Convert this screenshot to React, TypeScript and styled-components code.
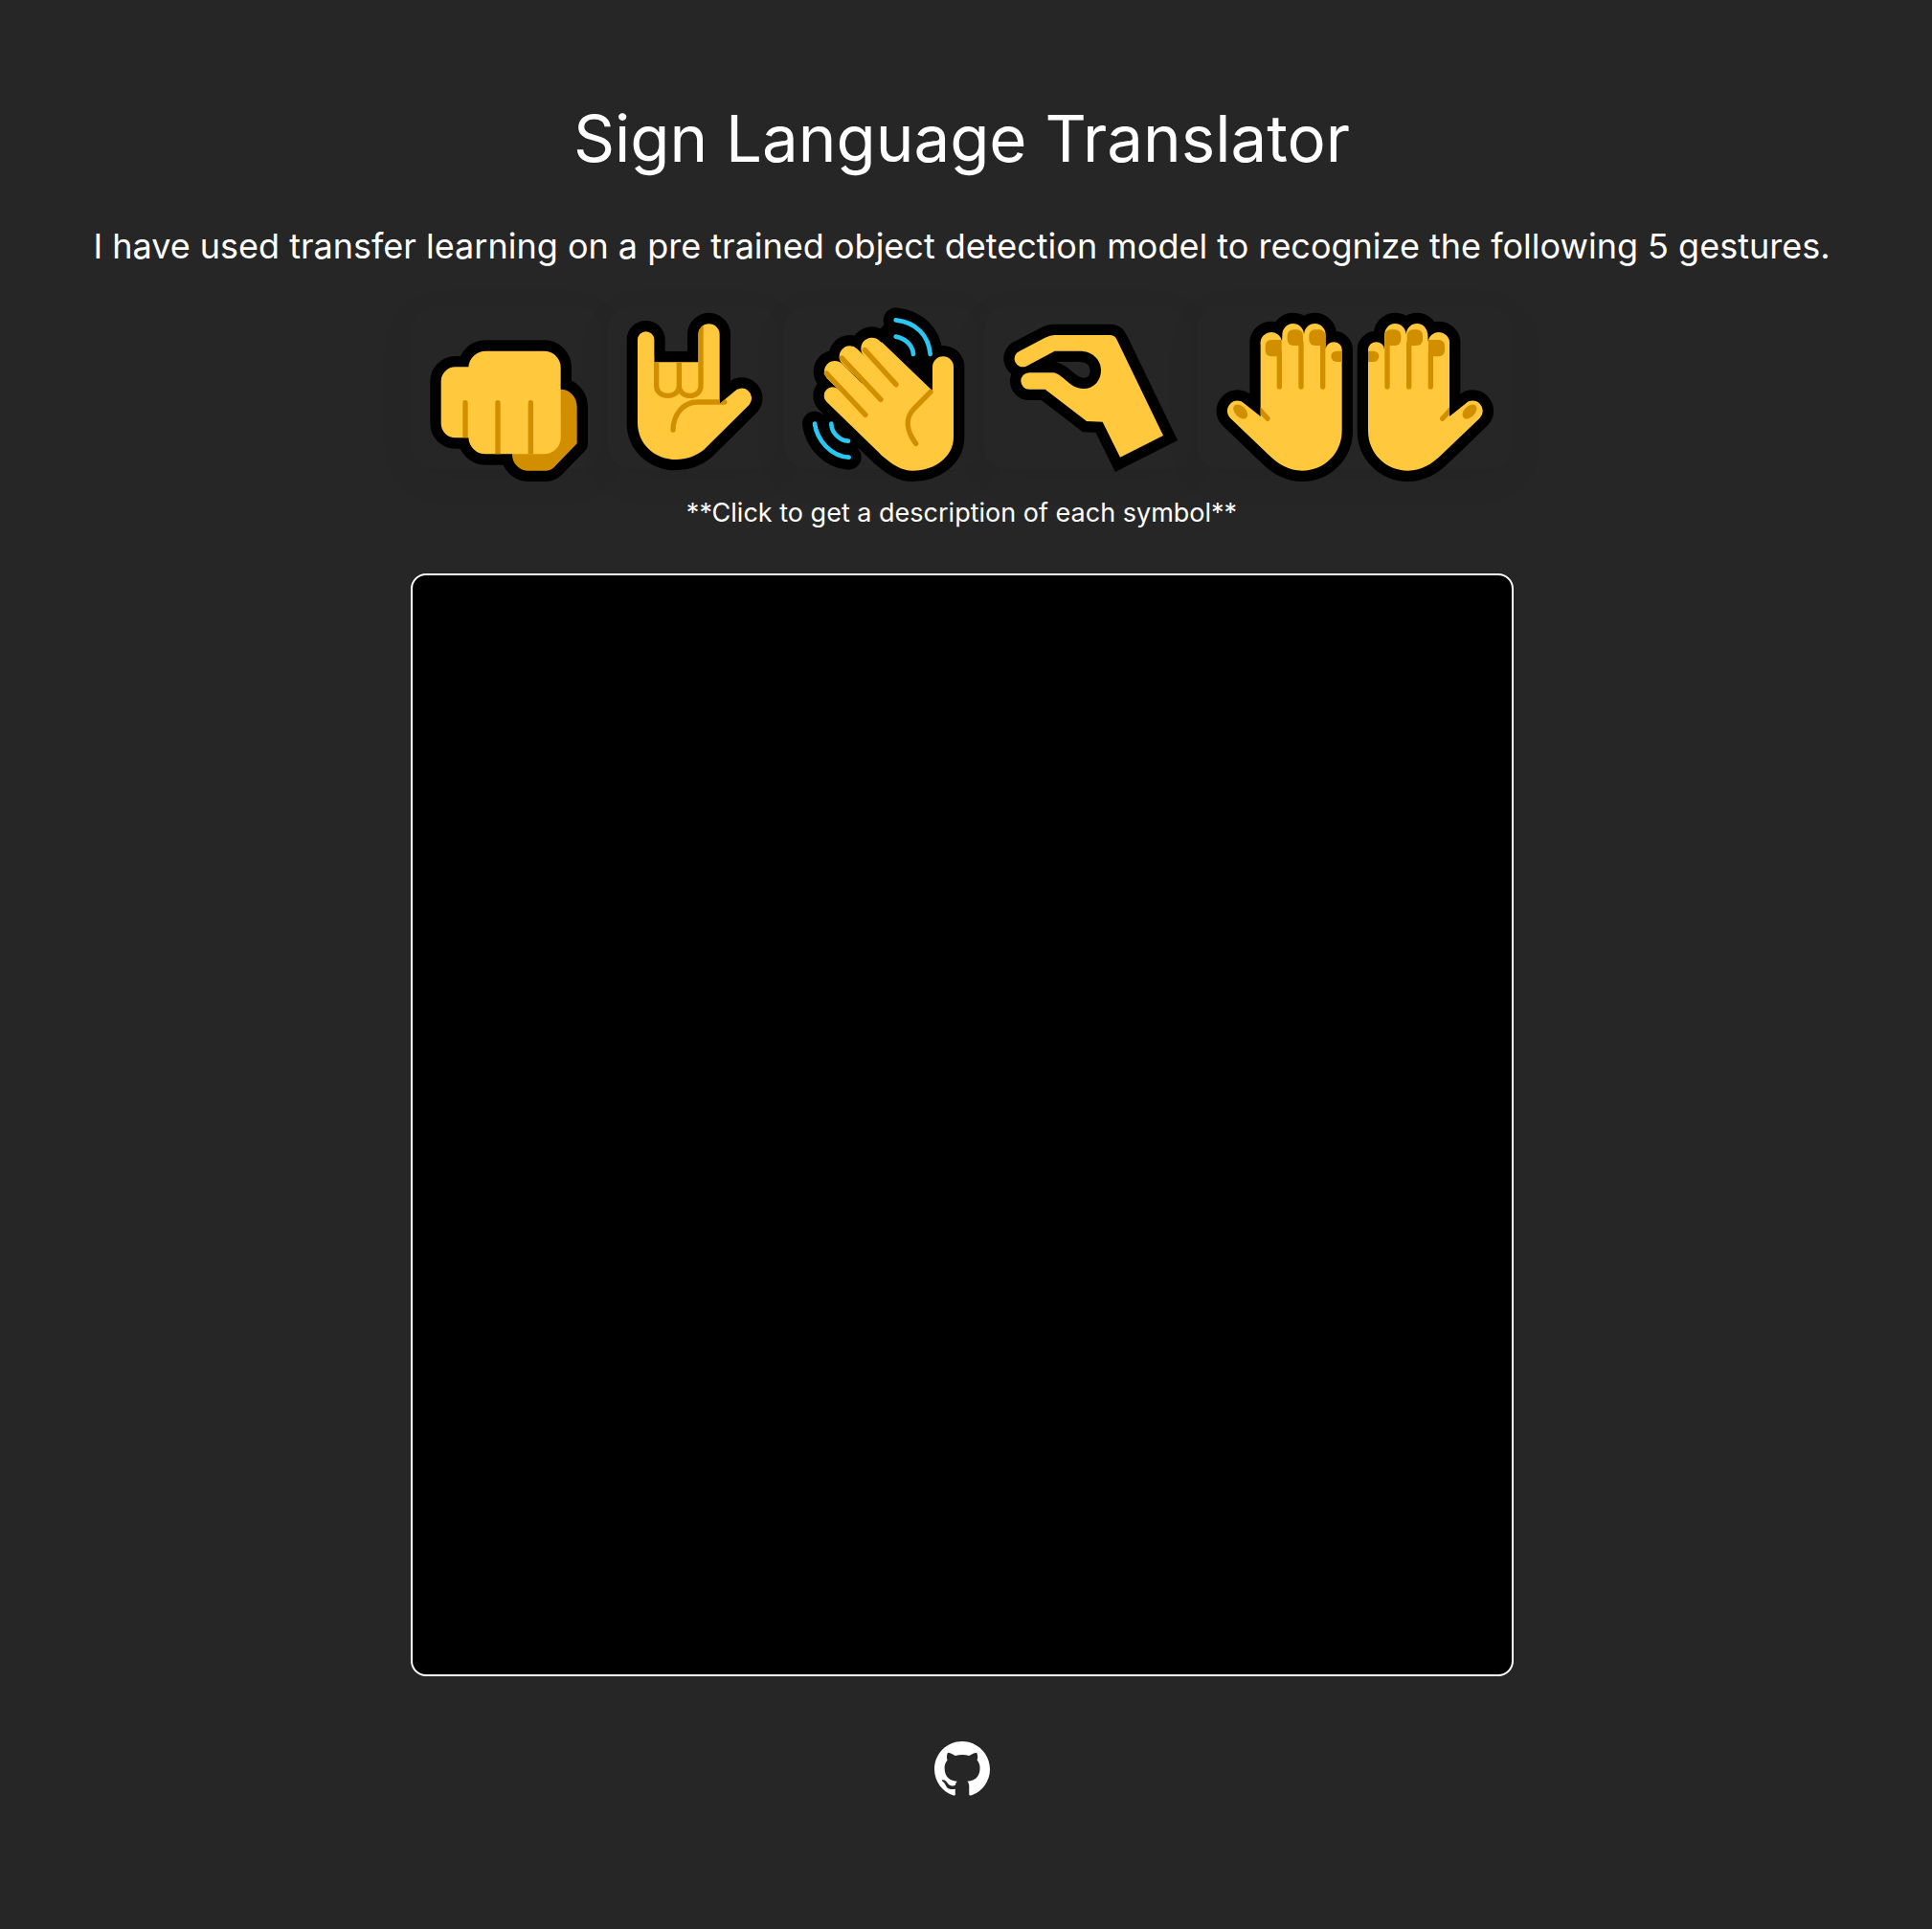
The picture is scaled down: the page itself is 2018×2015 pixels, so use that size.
import React from 'react'
import styled, { createGlobalStyle } from 'styled-components'

const YELLOW = '#FFC83D'
const DARK = '#D18F00'
const BLUE = '#29C8F2'

const Global = createGlobalStyle`
  html, body { margin: 0; padding: 0; background: #262626; }
  body { font-family: Inter, "Noto Sans", sans-serif; color: #fff; }
`

const Page = styled.main`
  display: flex;
  flex-direction: column;
  align-items: center;
  height: 2015px;
  box-sizing: border-box;
  padding: 105px 9px 0 0;
  overflow: hidden;
`

const Title = styled.h1`
  margin: 0;
  font-size: 67.2px;
  line-height: 80px;
  font-weight: 400;
`

const Subtitle = styled.p`
  margin: 50px 0 0;
  font-size: 36px;
  line-height: 44px;
  font-weight: 400;
`

const Gestures = styled.div`
  display: flex;
  gap: 7px;
  width: 1152px;
  margin-top: 41px;
`

const Gesture = styled.button<{ $width: number }>`
  flex: 0 0 ${p => p.$width}px;
  height: 170px;
  padding: 0;
  border: 0;
  border-radius: 24px;
  background: #262626;
  box-shadow: 0 10px 40px rgba(0, 0, 0, 0.05);
  cursor: pointer;
`

const EmojiSvg = styled.svg`
  display: block;
  width: 100%;
  height: 100%;
  overflow: visible;
`

const Hint = styled.p`
  margin: 28px 0 0;
  font-size: 27px;
  line-height: 36px;
`

const Stage = styled.div`
  box-sizing: border-box;
  width: 1152px;
  height: 1152px;
  margin-top: 45px;
  background: #000;
  border: 2px solid #fff;
  border-radius: 16px;
`

const GithubLink = styled.a`
  display: block;
  width: 58px;
  height: 58px;
  margin-top: 68px;
  color: #fff;
`

const Outline = styled.path<{ $miter?: boolean }>`
  fill: #000;
  stroke: #000;
  stroke-width: 68px;
  stroke-linejoin: ${p => (p.$miter ? 'miter' : 'round')};
  stroke-miterlimit: 3;
  stroke-linecap: round;
`

const Skin = styled.path<{ $dark?: boolean }>`
  fill: ${p => (p.$dark ? DARK : YELLOW)};
`

const Crease = styled.path`
  fill: none;
  stroke: ${DARK};
  stroke-width: 16px;
  stroke-linecap: round;
  stroke-linejoin: round;
`

const FingerEdge = styled.line<{ $w: number }>`
  stroke: #000;
  stroke-width: ${p => p.$w + 68}px;
  stroke-linecap: round;
`

const FingerSkin = styled.line<{ $w: number }>`
  stroke: ${YELLOW};
  stroke-width: ${p => p.$w}px;
  stroke-linecap: round;
`

const WaveOutline = styled.path`
  fill: none;
  stroke: #000;
  stroke-width: 78px;
  stroke-linecap: round;
`

const WaveArc = styled.path`
  fill: none;
  stroke: ${BLUE};
  stroke-width: 14px;
  stroke-linecap: round;
`

// all the hands are drawn at 3x, a 600px card is 200px on the page
const FIST_BACK = 'M497 320A50 55 0 0 1 548 375L548 490L480 560A40 40 0 0 1 452 575L395 575A50 50 0 0 1 345 525L345 400Z'
const FIST_FRONT = 'M262 200L445 200A52 52 0 0 1 497 252L497 471A52 52 0 0 1 445 523L262 523A54 54 0 0 1 208 472L167 472A45 45 0 0 1 122 427L122 295A45 45 0 0 1 167 250L208 250A54 54 0 0 1 262 200Z'

const Fist = () => (
  <EmojiSvg viewBox="27 60 597 510">
    <clipPath id="fist-clip"><path d={FIST_FRONT} /></clipPath>
    <Outline d={FIST_BACK} />
    <Outline d={FIST_FRONT} />
    <Skin $dark d={FIST_BACK} />
    <Skin d={FIST_FRONT} />
    <g clipPath="url(#fist-clip)">
      <Crease d="M198 362L198 500M300 362L300 540M403 362L403 540" />
    </g>
  </EmojiSvg>
)

const ROCK = 'M738 165A26 26 0 0 1 790 165L790 235L928 235L928 148A33.5 33.5 0 0 1 995 148L995 365L1040 328A28 28 0 0 1 1088 368L945 510C920 530 890 540 860 540C790 540 738 490 738 425Z'

const Rock = () => (
  <EmojiSvg viewBox="645 60 531 510">
    <clipPath id="rock-clip"><path d={ROCK} /></clipPath>
    <Outline d={ROCK} />
    <Skin d={ROCK} />
    <g clipPath="url(#rock-clip)">
      <Crease d="M797 220L797 310C797 350 868 350 868 310L868 220M868 310C868 350 936 350 936 310L936 100" />
      <Crease d="M1010 360L925 360C880 360 850 400 849 447" />
    </g>
  </EmojiSvg>
)

const PALM = 'M303 172L462 325L462 250A33 33 0 0 1 528 250L528 470C528 530 470 575 400 575C365 575 335 555 303 527L220 420L250 250Z'
const FINGERS = [
  { x1: 272, y1: 192, x2: 430, y2: 345, w: 68 },
  { x1: 203, y1: 217, x2: 350, y2: 360, w: 66 },
  { x1: 156, y1: 264, x2: 303, y2: 409, w: 66 },
  { x1: 149, y1: 340, x2: 322, y2: 508, w: 54 },
]

const Wave = () => (
  <EmojiSvg viewBox="-3 60 606 510">
    <WaveOutline d="M347 103C410 110 450 150 455 210M347 155C375 160 400 180 402 210" />
    <WaveOutline d="M93 428C100 480 145 530 200 533M145 428C145 455 170 480 198 482" />
    <Outline d="M347 130L440 200L462 325L303 172Z" />
    <Outline d={PALM} />
    {FINGERS.map(f => <FingerEdge key={f.x1} {...f} $w={f.w} />)}
    <Skin d={PALM} />
    {FINGERS.map(f => <FingerSkin key={f.x1} {...f} $w={f.w} />)}
    <Crease d="M250 197L348 305M178 222L300 352M130 270L252 400" />
    <Crease d="M456 328L405 380C375 410 380 450 410 490" />
    <WaveArc d="M347 103C410 110 450 150 455 210M347 155C375 160 400 180 402 210" />
    <WaveArc d="M93 428C100 480 145 530 200 533M145 428C145 455 170 480 198 482" />
  </EmojiSvg>
)

const PINCH = 'M735 200L815 158Q830 150 845 150L1020 150Q1035 152 1040 165L1185 465L1050 533L995 422L945 420L815 320L765 320A26 26 0 0 1 765 268L840 268C870 270 890 318 935 318C970 318 990 290 990 260C990 225 960 200 925 200L845 200L755 248A26 26 0 0 1 735 200Z'

const Pinch = () => (
  <EmojiSvg viewBox="624 60 645 510">
    <Outline $miter d={PINCH} />
    <Skin d={PINCH} />
  </EmojiSvg>
)

const HAND = 'M230 405L230 180A33 33 0 0 1 297 170L298 150A34 35 0 0 1 366 148A34 35 0 0 1 434 150L434 195A25 23 0 0 1 485 195L485 450C485 520 430 575 360 575C320 575 285 555 255 525L135 410A30 30 0 0 1 180 365Z'

const Hand = ({ mirrored }: { mirrored?: boolean }) => (
  <g transform={mirrored ? 'translate(1052 0) scale(-1 1)' : undefined}>
    <Skin d={HAND} />
    <g clipPath="url(#hand-clip)">
      <Crease d="M289 205L289 312M357 175L357 312M425 175L425 312" />
      <Skin $dark d="M263 165L296 165L296 217L263 217A18 18 0 0 1 245 199L245 183A18 18 0 0 1 263 165Z" />
      <Skin $dark d="M332 133L345 133A18 18 0 0 1 363 151L363 183L332 183A18 18 0 0 1 314 165L314 151A18 18 0 0 1 332 133Z" />
      <Skin $dark d="M400 133L415 133A18 18 0 0 1 433 151L433 183L400 183A18 18 0 0 1 382 165L382 151A18 18 0 0 1 400 133Z" />
      <Skin $dark d="M490 200L468 200A17 17 0 0 0 468 234L490 234Z" />
      <ellipse cx="167" cy="390" rx="27" ry="17" transform="rotate(45 167 390)" fill={DARK} />
      <Crease d="M225 382L252 412" />
    </g>
  </g>
)

const Hands = () => (
  <EmojiSvg viewBox="30 60 993 510">
    <clipPath id="hand-clip"><path d={HAND} /></clipPath>
    <Outline d={HAND} />
    <Outline d={HAND} transform="translate(1052 0) scale(-1 1)" />
    <Hand />
    <Hand mirrored />
  </EmojiSvg>
)

const GithubMark = () => (
  <svg viewBox="0 0 16 16" width="58" height="58" fill="currentColor">
    <path d="M8 0C3.58 0 0 3.58 0 8c0 3.54 2.29 6.53 5.47 7.59.4.07.55-.17.55-.38 0-.19-.01-.82-.01-1.49-2.01.37-2.53-.49-2.69-.94-.09-.23-.48-.94-.82-1.13-.28-.15-.68-.52-.01-.53.63-.01 1.08.58 1.23.82.72 1.21 1.87.87 2.33.66.07-.52.28-.87.51-1.07-1.78-.2-3.64-.89-3.64-3.95 0-.87.31-1.59.82-2.15-.08-.2-.36-1.02.08-2.12 0 0 .67-.21 2.2.82.64-.18 1.32-.27 2-.27.68 0 1.36.09 2 .27 1.53-1.04 2.2-.82 2.2-.82.44 1.1.16 1.92.08 2.12.51.56.82 1.27.82 2.15 0 3.07-1.87 3.75-3.65 3.95.29.25.54.73.54 1.48 0 1.07-.01 1.93-.01 2.2 0 .21.15.46.55.38A8.013 8.013 0 0016 8c0-4.42-3.58-8-8-8z" />
  </svg>
)

const gestures = [
  { name: 'fist', width: 199, Icon: Fist },
  { name: 'rock', width: 177, Icon: Rock },
  { name: 'wave', width: 202, Icon: Wave },
  { name: 'pinch', width: 215, Icon: Pinch },
  { name: 'hands', width: 331, Icon: Hands },
]

const App = () => (
  <>
    <Global />
    <Page>
      <Title>Sign Language Translator</Title>
      <Subtitle>I have used transfer learning on a pre trained object detection model to recognize the following 5 gestures.</Subtitle>
      <Gestures>
        {gestures.map(g => (
          <Gesture key={g.name} $width={g.width} aria-label={g.name}>
            <g.Icon />
          </Gesture>
        ))}
      </Gestures>
      <Hint>**Click to get a description of each symbol**</Hint>
      <Stage />
      <GithubLink href="#" aria-label="GitHub">
        <GithubMark />
      </GithubLink>
    </Page>
  </>
)

export default App
